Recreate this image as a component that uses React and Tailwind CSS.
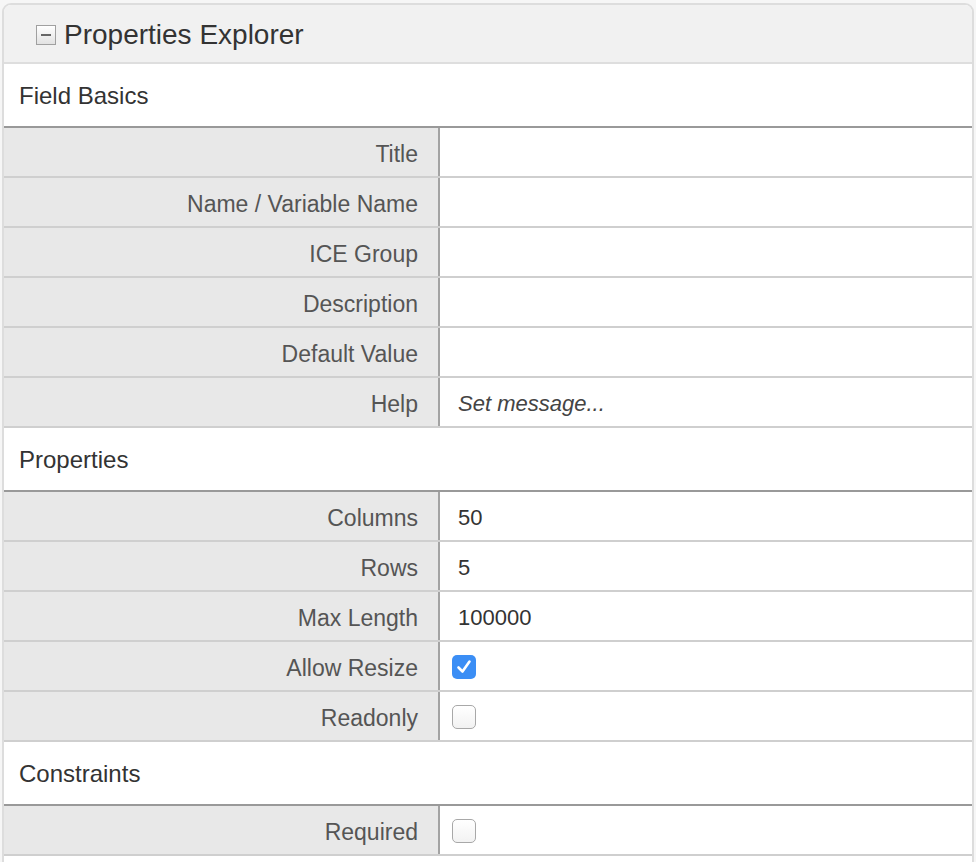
import React from 'react';

const sections = [
  {
    title: 'Field Basics',
    rows: [
      { label: 'Title' },
      { label: 'Name / Variable Name' },
      { label: 'ICE Group' },
      { label: 'Description' },
      { label: 'Default Value' },
      { label: 'Help', value: 'Set message...', italic: true },
    ],
  },
  {
    title: 'Properties',
    rows: [
      { label: 'Columns', value: '50' },
      { label: 'Rows', value: '5' },
      { label: 'Max Length', value: '100000' },
      { label: 'Allow Resize', checkbox: true, checked: true },
      { label: 'Readonly', checkbox: true, checked: false },
    ],
  },
  {
    title: 'Constraints',
    rows: [{ label: 'Required', checkbox: true, checked: false }],
  },
];

const Checkbox = ({ checked }) => {
  if (checked) {
    return (
      <div className="w-[24px] h-[24px] rounded-[5px] bg-[#3b8ef5] flex items-center justify-center">
        <svg width="18" height="18" viewBox="0 0 18 18" fill="none">
          <path d="M3.5 9.5 L7.5 13.5 L14.5 3.5" stroke="white" strokeWidth="2.6" strokeLinecap="round" strokeLinejoin="round" />
        </svg>
      </div>
    );
  }
  return (
    <div className="w-[24px] h-[24px] rounded-[5px] border border-[#a8a8a8] bg-gradient-to-b from-white to-[#f2f2f2]" />
  );
};

const PropRow = ({ row }) => (
  <div className="flex h-[50px] border-b-2 border-[#cfcfcf]">
    <div className="w-[436px] shrink-0 bg-[#e8e8e8] border-r-2 border-[#a3a3a3] flex items-center justify-end pr-[20px] pt-[4px] text-[23px] text-[#555]">
      {row.label}
    </div>
    <div className="flex-1 flex items-center text-[22px] text-[#333]">
      {row.checkbox ? (
        <div className="pl-[12px] pt-[2px]">
          <Checkbox checked={row.checked} />
        </div>
      ) : (
        <span className={row.italic ? 'pl-[18px] pt-[2px] italic text-[#444]' : 'pl-[18px] pt-[2px]'}>{row.value}</span>
      )}
    </div>
  </div>
);

export default function App() {
  return (
    <div className="min-h-screen bg-[#f6f6f6] pt-[3px] px-[2px] font-['Liberation_Sans',Arial,sans-serif]">
      <div className="rounded-t-[9px] border-2 border-[#dddddd] bg-white overflow-hidden">
        {/* Cabecera del panel */}
        <div className="h-[59px] bg-[#f1f1f1] border-b-2 border-[#dedede] flex items-center pl-[32px] gap-[8px] pt-[2px]">
          <div className="w-[20px] h-[20px] border border-[#a0a0a0] bg-gradient-to-b from-white to-[#e2e2e2] flex items-center justify-center">
            <div className="w-[10px] h-[2px] bg-[#666]" />
          </div>
          <span className="text-[28px] text-[#333] leading-none">Properties Explorer</span>
        </div>

        {sections.map((section) => (
          <div key={section.title}>
            <div className="h-[64px] border-b-2 border-[#999] flex items-center pl-[15px] pt-[2px] text-[24px] text-[#333]">
              {section.title}
            </div>
            {section.rows.map((row) => (
              <PropRow key={row.label} row={row} />
            ))}
          </div>
        ))}
        {/* Siguiente sección (fuera de la vista) */}
        <div className="h-[64px] border-b-2 border-[#999]" />
      </div>
    </div>
  );
}
